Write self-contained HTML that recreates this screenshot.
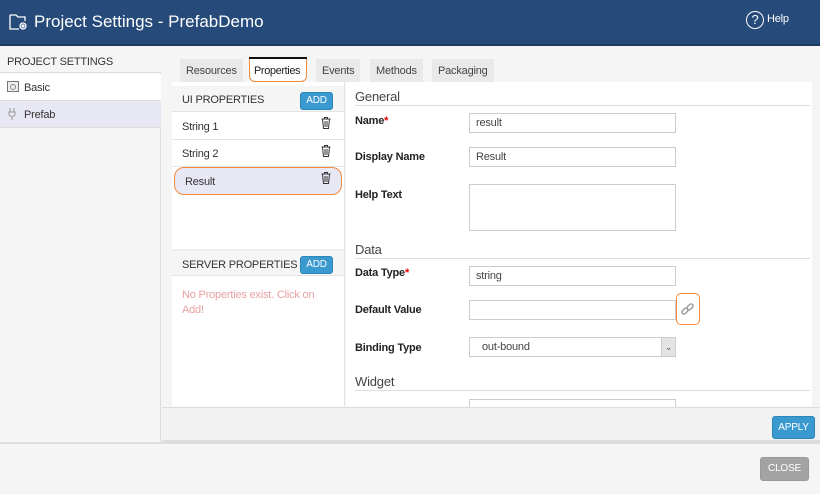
<!DOCTYPE html>
<html><head><style>
*{box-sizing:border-box;margin:0;padding:0}
body{width:820px;height:494px;position:relative;background:#f5f5f5;font-family:"Liberation Sans",sans-serif;font-size:11px;color:#333;overflow:hidden;letter-spacing:-0.2px}
.a{position:absolute}
.hdr{left:0;top:0;width:820px;height:46px;background:#264a7a;border-bottom:2px solid #1d3a63}
.inp{position:absolute;background:#fff;border:1px solid #ccc;height:20px;padding:3px 6px;font-size:11px;color:#444}
.lbl{position:absolute;font-weight:bold;font-size:11px;color:#222}
.star{color:#e00}
.sec{position:absolute;left:355px;width:455px;font-size:13px;color:#444;border-bottom:1px solid #ddd;height:17px}
.btn{position:absolute;background:#3a9ad0;color:#fff;border:1px solid #2a86bb;border-radius:3px;font-size:10px;text-align:center}
.tab{position:absolute;top:59px;height:23px;background:#e9e9e9;color:#444;font-size:11px;padding:6px 6px 0}
.item{position:absolute;left:172px;width:172px;height:27px;border-bottom:1px solid #e4e4e4;padding:8px 10px;font-size:11px}
.trash{position:absolute;right:10px;top:5px}
</style></head><body>
<div class="a hdr"></div>
<svg class="a" style="left:9px;top:12px" width="20" height="20" viewBox="0 0 20 20" fill="none" stroke="#fff" stroke-width="1.3"><path d="M1 3h6l2 2h7v4M1 3v14h9"/><circle cx="14" cy="14" r="3"/><circle cx="14" cy="14" r="1" fill="#fff"/></svg>
<div class="a" style="left:34px;top:12px;font-size:17px;color:#fff;letter-spacing:0">Project Settings - PrefabDemo</div>
<div class="a" style="left:746px;top:11px;width:18px;height:18px;border:1.5px solid #fff;border-radius:50%;color:#fff;font-size:13px;text-align:center;line-height:15px">?</div>
<div class="a" style="left:767px;top:13px;color:#fff;font-size:11px">Help</div>

<div class="a" style="left:0;top:48px;width:161px;height:394px;background:#f5f5f5;border-right:1px solid #ddd"></div>
<div class="a" style="left:0;top:48px;width:161px;height:25px;background:#f5f5f5;border-bottom:1px solid #ddd;padding:8px 7px;font-size:11px;color:#333">PROJECT SETTINGS</div>
<div class="a" style="left:0;top:74px;width:161px;height:27px;background:#fff;border-bottom:1px solid #ddd;padding:8px 0 0 24px">Basic</div>
<div class="a" style="left:7px;top:81px;width:12px;height:11px;border:1px solid #777;background:#eee"></div>
<div class="a" style="left:10px;top:84px;width:6px;height:6px;border:1px solid #888;border-radius:50%"></div>
<div class="a" style="left:0;top:101px;width:161px;height:27px;background:#e8e8f5;border-bottom:1px solid #ddd;padding:8px 0 0 24px">Prefab</div>
<svg class="a" style="left:7px;top:107px" width="10" height="14" viewBox="0 0 10 14" fill="none" stroke="#999"><path d="M3 1v4M7 1v4M2 5h6v3l-3 2-3-2zM5 10v3"/></svg>

<div class="tab" style="left:180px">Resources</div>
<div class="a" style="left:249px;top:57px;width:58px;height:3px;background:#111"></div>
<div class="tab" style="left:249px;width:58px;background:#fff;border:1px solid #f08a3c;border-top:none;border-radius:0 0 6px 6px;color:#222;padding-left:4px;letter-spacing:-0.4px">Properties</div>
<div class="tab" style="left:316px">Events</div>
<div class="tab" style="left:370px">Methods</div>
<div class="tab" style="left:432px">Packaging</div>

<div class="a" style="left:172px;top:82px;width:172px;height:324px;background:#fff"></div>
<div class="a" style="left:172px;top:86px;width:172px;height:26px;background:#f5f5f5;border-bottom:1px solid #e4e4e4;padding:8px 10px">UI PROPERTIES</div>
<div class="btn" style="left:300px;top:92px;width:33px;height:18px;line-height:16px">ADD</div>
<div class="item" style="top:113px">String 1</div>
<div class="item" style="top:140px">String 2</div>
<div class="item" style="top:167px;background:#e8e8f5;border:1px solid #f08a3c;border-radius:10px;left:174px;width:168px;height:28px">Result</div>
<svg class="a" style="left:321px;top:117px" width="10" height="12" viewBox="0 0 10 12" fill="none" stroke="#333"><path d="M0.5 2h9M3.5 2V0.5h3V2M1.5 2l1 9.5h5l1-9.5M4 4v6M6 4v6"/></svg>
<svg class="a" style="left:321px;top:145px" width="10" height="12" viewBox="0 0 10 12" fill="none" stroke="#333"><path d="M0.5 2h9M3.5 2V0.5h3V2M1.5 2l1 9.5h5l1-9.5M4 4v6M6 4v6"/></svg>
<svg class="a" style="left:321px;top:172px" width="10" height="12" viewBox="0 0 10 12" fill="none" stroke="#333"><path d="M0.5 2h9M3.5 2V0.5h3V2M1.5 2l1 9.5h5l1-9.5M4 4v6M6 4v6"/></svg>
<div class="a" style="left:172px;top:249px;width:172px;height:27px;background:#f5f5f5;border-bottom:1px solid #e4e4e4;border-top:2px solid #eee;padding:8px 10px">SERVER PROPERTIES</div>
<div class="btn" style="left:300px;top:256px;width:33px;height:18px;line-height:16px">ADD</div>
<div class="a" style="left:182px;top:288px;width:140px;color:#e8a0a0;line-height:15px">No Properties exist. Click on Add!</div>
<div class="a" style="left:344px;top:82px;width:1px;height:324px;background:#e4e4e4"></div>

<div class="a" style="left:346px;top:82px;width:466px;height:324px;background:#fff"></div>
<div class="sec" style="top:89px">General</div>
<div class="lbl" style="left:355px;top:115px">Name<span class="star">*</span></div>
<div class="inp" style="left:469px;top:113px;width:207px">result</div>
<div class="lbl" style="left:355px;top:151px">Display Name</div>
<div class="inp" style="left:469px;top:147px;width:207px">Result</div>
<div class="lbl" style="left:355px;top:189px">Help Text</div>
<div class="inp" style="left:469px;top:184px;width:207px;height:47px"></div>
<div class="sec" style="top:242px">Data</div>
<div class="lbl" style="left:355px;top:267px">Data Type<span class="star">*</span></div>
<div class="inp" style="left:469px;top:266px;width:207px">string</div>
<div class="lbl" style="left:355px;top:304px">Default Value</div>
<div class="inp" style="left:469px;top:300px;width:207px"></div>
<div class="a" style="left:676px;top:293px;width:24px;height:32px;border:1px solid #f08a3c;border-radius:5px"></div>
<svg class="a" style="left:680px;top:302px" width="15" height="15" viewBox="0 0 15 15" fill="none" stroke="#999" stroke-width="1.4"><rect x="1.5" y="7" width="7" height="4" rx="2" transform="rotate(-45 5 9)"/><rect x="6.5" y="3" width="7" height="4" rx="2" transform="rotate(-45 10 5)"/></svg>
<div class="lbl" style="left:355px;top:342px">Binding Type</div>
<div class="inp" style="left:469px;top:337px;width:207px;padding-left:12px">out-bound</div>
<div class="a" style="left:661px;top:338px;width:14px;height:18px;background:#e4e4e4;border-left:1px solid #ccc;font-size:9px;text-align:center;line-height:18px;color:#555">⌄</div>
<div class="sec" style="top:374px">Widget</div>
<div class="inp" style="left:469px;top:399px;width:207px;height:8px;border-bottom:none"></div>

<div class="a" style="left:162px;top:407px;width:658px;height:35px;background:#f2f2f2;border-top:1px solid #ddd;border-bottom:2px solid #ddd"></div>
<div class="btn" style="left:772px;top:416px;width:43px;height:23px;line-height:21px">APPLY</div>
<div class="a" style="left:0;top:442px;width:820px;height:2px;background:#ddd"></div>
<div class="btn" style="left:760px;top:457px;width:49px;height:24px;line-height:22px;background:#a3a3a3;border-color:#999">CLOSE</div>
</body></html>
